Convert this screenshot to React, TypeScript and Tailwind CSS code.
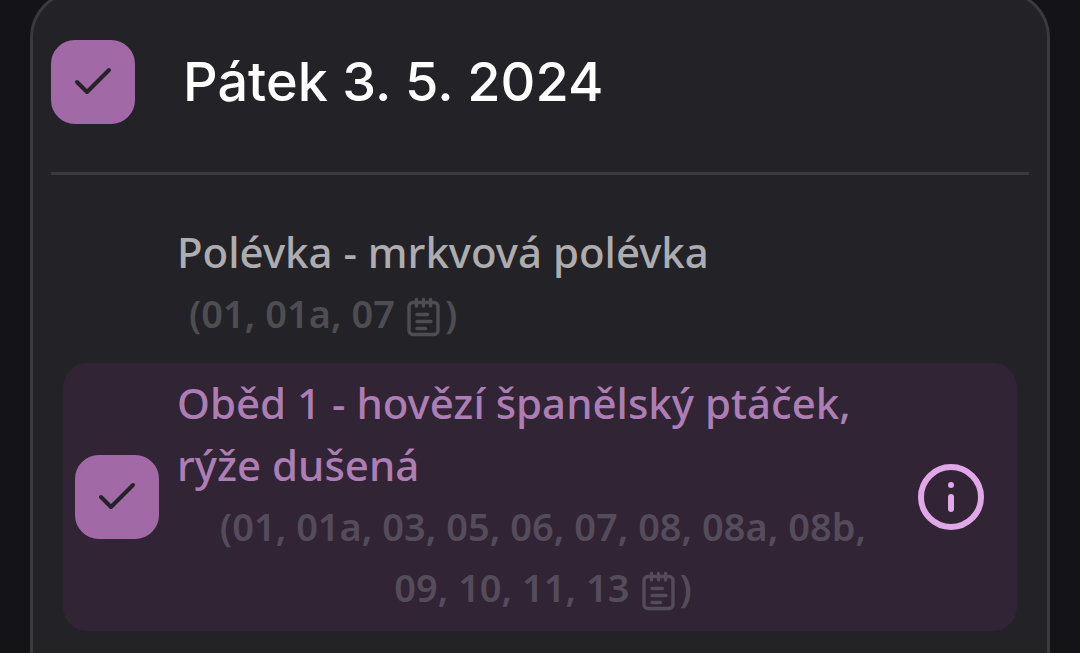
import { ReactNode } from 'react'
import clsx from 'clsx'

type CheckBoxProp = {
  id: string
}

type AllergensProp = {
  className?: string
  children: ReactNode
}

type MealProp = {
  id: string
  name: string
  allergens: string
  ordered?: boolean
}

const meals: MealProp[] = [
  { id: 'soup', name: 'Polévka - mrkvová polévka', allergens: '01, 01a, 07' },
  {
    id: 'lunch-1',
    name: 'Oběd 1 - hovězí španělský ptáček, rýže dušená',
    allergens: '01, 01a, 03, 05, 06, 07, 08, 08a, 08b, 09, 10, 11, 13',
    ordered: true,
  },
]

function CheckBox({ id }: CheckBoxProp) {
  return (
    <span className="grid shrink-0">
      <input
        id={id}
        type="checkbox"
        defaultChecked
        className="peer col-start-1 row-start-1 size-21 appearance-none rounded-3xl border-3 border-[#a169a5] checked:bg-[#a169a5]"
      />
      <svg
        viewBox="0 0 84 84"
        className="pointer-events-none invisible col-start-1 row-start-1 size-21 peer-checked:visible"
        fill="none"
        stroke="#252229"
        strokeWidth="4"
        strokeLinecap="round"
        strokeLinejoin="round"
      >
        <path d="M26 42 L36 52 L58 30" />
      </svg>
    </span>
  )
}

function NotepadIcon() {
  return (
    <svg
      viewBox="0 0 34 40"
      className="ml-3 mr-1 inline h-10 w-[34px] align-[-9px]"
      fill="none"
      stroke="currentColor"
      strokeWidth="3.4"
      strokeLinecap="round"
    >
      <rect x="2" y="5.5" width="29" height="32" rx="4" />
      <path d="M9.500 2.500v6.500M16.500 2.500v6.500M23.500 2.500v6.500" />
      <path d="M10 17.500h10.500M10 24.500h14M10 31.500h8.500" />
    </svg>
  )
}

function InfoIcon() {
  return (
    <svg viewBox="0 0 66 66" className="size-[66px]" fill="none" stroke="#e1a8e8" strokeWidth="6" strokeLinecap="round">
      <circle cx="33" cy="33" r="30" />
      <path d="M33 33v12" />
      <circle cx="33" cy="21" r="3" fill="#e1a8e8" stroke="none" />
    </svg>
  )
}

function Allergens({ className, children }: AllergensProp) {
  return (
    <p className={clsx('w-fit px-3 text-center text-[38px] leading-[61px] font-semibold', className)}>
      ({children}
      <NotepadIcon />)
    </p>
  )
}

function Meal({ id, name, allergens, ordered }: MealProp) {
  return (
    <li
      className={clsx(
        'flex items-center rounded-3xl pl-3 pr-[33px]',
        ordered ? 'bg-[#312434] py-[9px]' : 'py-[15px]'
      )}
    >
      {ordered ? <CheckBox id={id} /> : <span className="w-21 shrink-0" />}
      <div className={clsx('ml-[18px] min-w-0 flex-1 pb-1', ordered && 'pr-[9px]')}>
        <label
          htmlFor={ordered ? id : undefined}
          className={clsx('block text-[42px] leading-[62px] font-medium', ordered ? 'text-[#ac7eb4]' : 'text-[#adacae]')}
        >
          {name}
        </label>
        <Allergens className={ordered ? 'text-[#544c5b]' : 'text-[#4e4d52]'}>{allergens}</Allergens>
      </div>
      {ordered && (
        <button type="button" aria-label="Informace" className="shrink-0">
          <InfoIcon />
        </button>
      )}
    </li>
  )
}

export default function App() {
  return (
    <main className="h-screen overflow-hidden bg-[#141317] px-[30px] font-['Noto_Sans',sans-serif]">
      <section className="-mt-[10px] min-h-[110vh] rounded-[48px] border-3 border-[#3a393e] bg-[#232227] px-[18px] pt-[47px]">
        <header className="flex items-center gap-12 border-b-3 border-[#3a393e] pb-12">
          <CheckBox id="day" />
          <label htmlFor="day" className="font-['Inter',sans-serif] text-[54px] leading-[84px] font-medium text-white">
            Pátek 3. 5. 2024
          </label>
        </header>
        <ul className="px-3 pt-[31px]">
          {meals.map((meal) => (
            <Meal key={meal.id} {...meal} />
          ))}
        </ul>
      </section>
    </main>
  )
}
